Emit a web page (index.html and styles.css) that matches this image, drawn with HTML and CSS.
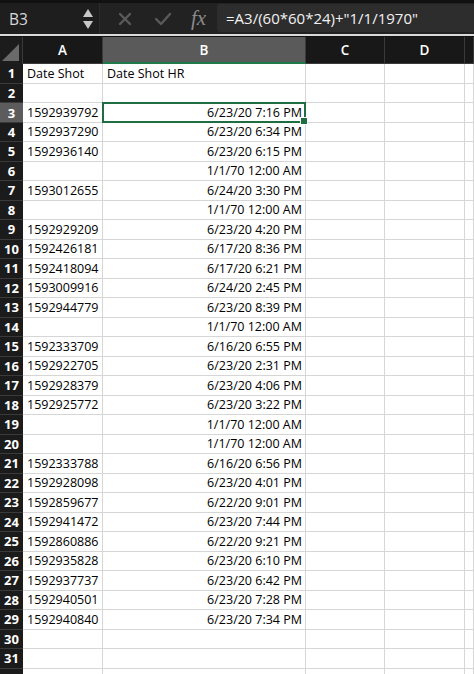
FILE: index.html
```html
<!DOCTYPE html>
<html lang="en">
<head>
  <meta charset="UTF-8" />
  <title>Sheet</title>
  <link rel="stylesheet" href="styles.css">
</head>
<body>
  <!-- Formula bar -->
  <div class="formula-bar">
    <div class="name-box">
      <span class="cell-ref">B3</span>
      <span class="spinner">
        <svg width="12" height="24" viewBox="0 0 12 24">
          <polygon points="6,2 11,10 1,10" fill="#c8c8c8"/>
          <polygon points="1,14 11,14 6,22" fill="#c8c8c8"/>
        </svg>
      </span>
    </div>
    <div class="formula-tools">
      <svg class="tool" width="16" height="16" viewBox="0 0 16 16">
        <path d="M3 3 L13 13 M13 3 L3 13" stroke="#5a5a5a" stroke-width="2.4" stroke-linecap="round"/>
      </svg>
      <svg class="tool" width="18" height="16" viewBox="0 0 18 16">
        <path d="M2 8 L7 13 L16 3" stroke="#5a5a5a" stroke-width="2.4" fill="none" stroke-linecap="round" stroke-linejoin="round"/>
      </svg>
      <span class="fx">fx</span>
    </div>
    <div class="formula-input">=A3/(60*60*24)+"1/1/1970"</div>
  </div>

  <div class="sheet">
    <div class="row col-heads">
      <div class="corner"></div>
      <div class="col-head">A</div>
      <div class="col-head selected">B</div>
      <div class="col-head">C</div>
      <div class="col-head">D</div>
      <div class="col-head"></div>
    </div>

    <div class="row"><div class="rh">1</div><div class="c">Date Shot</div><div class="c">Date Shot HR</div><div class="c"></div><div class="c"></div><div class="c"></div></div>
    <div class="row"><div class="rh">2</div><div class="c"></div><div class="c"></div><div class="c"></div><div class="c"></div><div class="c"></div></div>
    <div class="row"><div class="rh current">3</div><div class="c">1592939792</div><div class="c num active">6/23/20 7:16 PM</div><div class="c"></div><div class="c"></div><div class="c"></div></div>
    <div class="row"><div class="rh">4</div><div class="c">1592937290</div><div class="c num">6/23/20 6:34 PM</div><div class="c"></div><div class="c"></div><div class="c"></div></div>
    <div class="row"><div class="rh">5</div><div class="c">1592936140</div><div class="c num">6/23/20 6:15 PM</div><div class="c"></div><div class="c"></div><div class="c"></div></div>
    <div class="row"><div class="rh">6</div><div class="c"></div><div class="c num">1/1/70 12:00 AM</div><div class="c"></div><div class="c"></div><div class="c"></div></div>
    <div class="row"><div class="rh">7</div><div class="c">1593012655</div><div class="c num">6/24/20 3:30 PM</div><div class="c"></div><div class="c"></div><div class="c"></div></div>
    <div class="row"><div class="rh">8</div><div class="c"></div><div class="c num">1/1/70 12:00 AM</div><div class="c"></div><div class="c"></div><div class="c"></div></div>
    <div class="row"><div class="rh">9</div><div class="c">1592929209</div><div class="c num">6/23/20 4:20 PM</div><div class="c"></div><div class="c"></div><div class="c"></div></div>
    <div class="row"><div class="rh">10</div><div class="c">1592426181</div><div class="c num">6/17/20 8:36 PM</div><div class="c"></div><div class="c"></div><div class="c"></div></div>
    <div class="row"><div class="rh">11</div><div class="c">1592418094</div><div class="c num">6/17/20 6:21 PM</div><div class="c"></div><div class="c"></div><div class="c"></div></div>
    <div class="row"><div class="rh">12</div><div class="c">1593009916</div><div class="c num">6/24/20 2:45 PM</div><div class="c"></div><div class="c"></div><div class="c"></div></div>
    <div class="row"><div class="rh">13</div><div class="c">1592944779</div><div class="c num">6/23/20 8:39 PM</div><div class="c"></div><div class="c"></div><div class="c"></div></div>
    <div class="row"><div class="rh">14</div><div class="c"></div><div class="c num">1/1/70 12:00 AM</div><div class="c"></div><div class="c"></div><div class="c"></div></div>
    <div class="row"><div class="rh">15</div><div class="c">1592333709</div><div class="c num">6/16/20 6:55 PM</div><div class="c"></div><div class="c"></div><div class="c"></div></div>
    <div class="row"><div class="rh">16</div><div class="c">1592922705</div><div class="c num">6/23/20 2:31 PM</div><div class="c"></div><div class="c"></div><div class="c"></div></div>
    <div class="row"><div class="rh">17</div><div class="c">1592928379</div><div class="c num">6/23/20 4:06 PM</div><div class="c"></div><div class="c"></div><div class="c"></div></div>
    <div class="row"><div class="rh">18</div><div class="c">1592925772</div><div class="c num">6/23/20 3:22 PM</div><div class="c"></div><div class="c"></div><div class="c"></div></div>
    <div class="row"><div class="rh">19</div><div class="c"></div><div class="c num">1/1/70 12:00 AM</div><div class="c"></div><div class="c"></div><div class="c"></div></div>
    <div class="row"><div class="rh">20</div><div class="c"></div><div class="c num">1/1/70 12:00 AM</div><div class="c"></div><div class="c"></div><div class="c"></div></div>
    <div class="row"><div class="rh">21</div><div class="c">1592333788</div><div class="c num">6/16/20 6:56 PM</div><div class="c"></div><div class="c"></div><div class="c"></div></div>
    <div class="row"><div class="rh">22</div><div class="c">1592928098</div><div class="c num">6/23/20 4:01 PM</div><div class="c"></div><div class="c"></div><div class="c"></div></div>
    <div class="row"><div class="rh">23</div><div class="c">1592859677</div><div class="c num">6/22/20 9:01 PM</div><div class="c"></div><div class="c"></div><div class="c"></div></div>
    <div class="row"><div class="rh">24</div><div class="c">1592941472</div><div class="c num">6/23/20 7:44 PM</div><div class="c"></div><div class="c"></div><div class="c"></div></div>
    <div class="row"><div class="rh">25</div><div class="c">1592860886</div><div class="c num">6/22/20 9:21 PM</div><div class="c"></div><div class="c"></div><div class="c"></div></div>
    <div class="row"><div class="rh">26</div><div class="c">1592935828</div><div class="c num">6/23/20 6:10 PM</div><div class="c"></div><div class="c"></div><div class="c"></div></div>
    <div class="row"><div class="rh">27</div><div class="c">1592937737</div><div class="c num">6/23/20 6:42 PM</div><div class="c"></div><div class="c"></div><div class="c"></div></div>
    <div class="row"><div class="rh">28</div><div class="c">1592940501</div><div class="c num">6/23/20 7:28 PM</div><div class="c"></div><div class="c"></div><div class="c"></div></div>
    <div class="row"><div class="rh">29</div><div class="c">1592940840</div><div class="c num">6/23/20 7:34 PM</div><div class="c"></div><div class="c"></div><div class="c"></div></div>
    <div class="row"><div class="rh">30</div><div class="c"></div><div class="c"></div><div class="c"></div><div class="c"></div><div class="c"></div></div>
    <div class="row"><div class="rh">31</div><div class="c"></div><div class="c"></div><div class="c"></div><div class="c"></div><div class="c"></div></div>
    <div class="row"><div class="rh"></div><div class="c"></div><div class="c"></div><div class="c"></div><div class="c"></div><div class="c"></div></div>
  </div>
</body>
</html>
```

FILE: styles.css
```css
* {
  box-sizing: border-box;
}

body {
  margin: 0;
  padding: 0;
  background: #ffffff;
  font-family: 'Open Sans', sans-serif;
  overflow: hidden;
}

/* formula bar */
.formula-bar {
  display: flex;
  height: 36px;
  background: #222222;
  border-top: 3px solid #111111;
  border-bottom: 2px solid #d9d9d9;
}

.name-box {
  width: 100px;
  display: flex;
  align-items: center;
  justify-content: space-between;
  padding: 0 5px 0 9px;
  background: #1e1e1e;
  border-right: 1px solid #2c2c2c;
}

.cell-ref {
  color: #d8d8d8;
  font-size: 15.5px;
}

.spinner svg {
  display: block;
}

.formula-tools {
  width: 117px;
  display: flex;
  align-items: center;
  gap: 21px;
  padding-left: 17px;
}

.tool {
  display: block;
}

.fx {
  font-family: 'Liberation Serif', serif;
  font-style: italic;
  font-size: 21px;
  color: #8a8a8a;
  margin-left: -2px;
}

.formula-input {
  flex: 1;
  background: #2d2d2d;
  color: #f2f2f2;
  font-size: 15px;
  display: flex;
  align-items: center;
  padding-left: 9px;
  margin: 1px 0 2px;
  border-radius: 3px 0 0 3px;
}

/* grid */
.sheet {
  border-top: 1px solid #111111;
}

.row {
  display: grid;
  grid-template-columns: 23px 80px 203px 79px 80px 1fr;
  height: 19.5px;
  font-size: 12.5px;
  color: #000000;
}

.col-heads {
  height: 27px;
  background: #181818;
}

.corner {
  position: relative;
  background: #1c1c1c;
  border-right: 1px solid #3a3a3a;
}

.corner::after {
  content: "";
  position: absolute;
  right: 3px;
  bottom: 3px;
  border-left: 17px solid transparent;
  border-bottom: 17px solid #6a6a6a;
}

.col-head {
  color: #ffffff;
  font-weight: 600;
  font-size: 13.5px;
  display: flex;
  align-items: center;
  justify-content: center;
  border-right: 1px solid #3a3a3a;
  border-bottom: 1px solid #3a3a3a;
}

.col-head.selected {
  background: #5a5a5a;
  border-bottom: 2px solid #1f7a47;
}

.rh {
  background: #1b1b1b;
  color: #ffffff;
  font-weight: 700;
  font-size: 13px;
  display: flex;
  align-items: center;
  justify-content: center;
  border-bottom: 1px solid #3a3a3a;
}

.rh.current {
  background: #5c5c5c;
}

.c {
  display: flex;
  align-items: center;
  padding: 0 3px 0 4px;
  border-right: 1px solid #d6d6d6;
  border-bottom: 1px solid #d6d6d6;
  white-space: nowrap;
  overflow: visible;
}

.c.num {
  justify-content: flex-end;
}

.c.active {
  position: relative;
  border: 2px solid #1e6e42;
  margin: -1px 0 0 -1px;
  padding-right: 2px;
}

.c.active::after {
  content: "";
  position: absolute;
  right: -4px;
  bottom: -4px;
  width: 6px;
  height: 6px;
  background: #1e6e42;
  border: 1px solid #ffffff;
}
```
